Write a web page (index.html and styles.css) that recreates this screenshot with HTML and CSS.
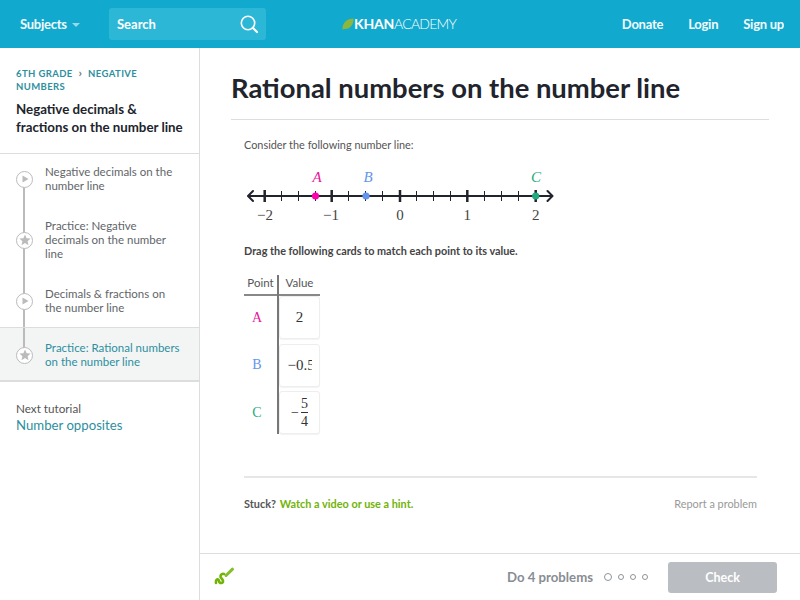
FILE: index.html
```html
<!DOCTYPE html>
<html lang="en">
<head>
    <meta charset="UTF-8">
    <title>Rational numbers on the number line</title>
    <link rel="stylesheet" href="styles.css">
</head>
<body>
    <header class="topbar">
        <div class="topbar-left">
            <a class="nav-link subjects">Subjects <span class="caret"></span></a>
            <div class="search">
                <span>Search</span>
                <svg width="20" height="20" viewBox="0 0 20 20" fill="none" stroke="#fff">
                    <circle cx="9" cy="9" r="6.7" stroke-width="1.6"/>
                    <path d="M13.8 13.8 L18 18" stroke-width="2.2" stroke-linecap="round"/>
                </svg>
            </div>
        </div>
        <div class="logo">
            <svg width="12" height="12" viewBox="0 0 12 12"><path d="M0.5 11.5 C0 5 5 0.5 11.5 0.5 C12 6 8 11.5 2.5 11 Z" fill="#8cb63c"/></svg>
            <span class="logo-bold">KHAN</span><span class="logo-light">ACADEMY</span>
        </div>
        <nav class="topbar-right">
            <a class="nav-link">Donate</a>
            <a class="nav-link">Login</a>
            <a class="nav-link">Sign up</a>
        </nav>
    </header>

    <div class="page">
        <aside class="sidebar">
            <div class="side-head">
                <div class="crumbs">
                    <div>6TH GRADE <span class="crumb-sep">&#8250;</span> NEGATIVE</div>
                    <div>NUMBERS</div>
                </div>
                <h2>Negative decimals &amp;<br>fractions on the number line</h2>
            </div>
            <ul class="lessons">
                <li class="lesson lesson-first">
                    <span class="node"><svg width="10" height="10" viewBox="0 0 10 10"><path d="M2.500 1.500 L8.500 5 L2.500 8.500 Z" fill="#bbb"/></svg></span>
                    <span>Negative decimals on the<br>number line</span>
                </li>
                <li class="lesson">
                    <span class="node"><svg width="12" height="12" viewBox="0 0 12 12"><path d="M6 0.5 L7.6 4.2 L11.6 4.6 L8.6 7.2 L9.5 11.2 L6 9.1 L2.5 11.2 L3.4 7.2 L0.4 4.6 L4.4 4.2 Z" fill="#bbb"/></svg></span>
                    <span>Practice: Negative<br>decimals on the number<br>line</span>
                </li>
                <li class="lesson lesson-third">
                    <span class="node"><svg width="10" height="10" viewBox="0 0 10 10"><path d="M2.500 1.500 L8.500 5 L2.500 8.500 Z" fill="#bbb"/></svg></span>
                    <span>Decimals &amp; fractions on<br>the number line</span>
                </li>
                <li class="lesson lesson-last active">
                    <span class="node"><svg width="12" height="12" viewBox="0 0 12 12"><path d="M6 0.5 L7.6 4.2 L11.6 4.6 L8.6 7.2 L9.5 11.2 L6 9.1 L2.5 11.2 L3.4 7.2 L0.4 4.6 L4.4 4.2 Z" fill="#bbb"/></svg></span>
                    <span>Practice: Rational numbers<br>on the number line</span>
                </li>
            </ul>
            <div class="next">
                <div class="next-label">Next tutorial</div>
                <a class="next-link">Number opposites</a>
            </div>
        </aside>

        <main class="main">
            <div class="content">
                <h1>Rational numbers on the number line</h1>
                <div class="problem">
                    <p class="intro">Consider the following number line:</p>
                    <svg class="numline" width="320" height="70" viewBox="0 0 320 70">
                        <g stroke="#21242c" stroke-width="1">
                            <path d="M37.500 31v10M54.500 31v10M71.500 31v10M104.500 31v10M121.500 31v10M138.500 31v10M172.500 31v10M189.500 31v10M206.500 31v10M240.500 31v10M257.500 31v10M274.500 31v10"/>
                        </g>
                        <g stroke="#21242c" stroke-width="2" fill="none">
                            <path d="M4 36H308.500"/>
                            <path stroke-width="2.500" d="M20.700 30v12M87.700 30v12M156 30v12M223.300 30v12M291.700 30v12"/>
                            <path d="M9 31L4 36L9 41M303.500 31L308.500 36L303.500 41" stroke-linecap="round" stroke-linejoin="round"/>
                        </g>
                        <circle cx="71.500" cy="36" r="3.600" fill="#ff00af"/>
                        <circle cx="122" cy="36" r="3.600" fill="#6495ed"/>
                        <circle cx="291.700" cy="36" r="3.600" fill="#1fab7d"/>
                        <text class="pt" x="73" y="22" text-anchor="middle" fill="#e6149b">A</text>
                        <text class="pt" x="124" y="22" text-anchor="middle" fill="#6495ed">B</text>
                        <text class="pt" x="292" y="22" text-anchor="middle" fill="#1fab7d">C</text>
                        <text class="tick" x="21" y="60" text-anchor="middle">&#8722;2</text>
                        <text class="tick" x="87" y="60" text-anchor="middle">&#8722;1</text>
                        <text class="tick" x="156" y="60" text-anchor="middle">0</text>
                        <text class="tick" x="223.300" y="60" text-anchor="middle">1</text>
                        <text class="tick" x="291.700" y="60" text-anchor="middle">2</text>
                    </svg>
                    <p class="drag">Drag the following cards to match each point to its value.</p>
                    <div class="match">
                        <div class="col-points">
                            <div class="col-head">Point</div>
                            <div class="point pink">A</div>
                            <div class="point blue">B</div>
                            <div class="point green">C</div>
                        </div>
                        <div class="col-values">
                            <div class="col-head">Value</div>
                            <div class="card">2</div>
                            <div class="card"><span class="clip">&#8722;0.5</span></div>
                            <div class="card card-frac">
                                <span class="minus">&#8722;</span>
                                <span class="frac"><span class="num">5</span><span class="den">4</span></span>
                            </div>
                        </div>
                    </div>
                </div>
                <div class="stuck-row">
                    <div><strong class="stuck">Stuck?</strong> <a class="hint">Watch a video or use a hint.</a></div>
                    <a class="report">Report a problem</a>
                </div>
            </div>
            <footer class="footer">
                <svg width="22" height="22" viewBox="0 0 22 22" fill="none" stroke="#71b307">
                    <path d="M3 17 C2.500 13 5.500 12 6 15 C6.500 18 10.500 17.500 10 15 C9.500 12.500 7 12 7.500 10 C8 8 9.500 7.500 11 8" stroke-width="2.600" stroke-linecap="round"/>
                    <path d="M13 9.500 L19.500 3.200" stroke="#85bd2c" stroke-width="3" stroke-linecap="round"/>
                </svg>
                <div class="footer-right">
                    <span class="do-text">Do 4 problems</span>
                    <span class="dots"><i class="dot dot-first"></i><i class="dot"></i><i class="dot"></i><i class="dot"></i></span>
                    <button class="check">Check</button>
                </div>
            </footer>
        </main>
    </div>
</body>
</html>
```

FILE: styles.css
```css
* {
    margin: 0;
    padding: 0;
    box-sizing: border-box;
}

html, body {
    height: 100%;
    overflow: hidden;
}

body {
    font-family: 'Lato', 'Liberation Sans', sans-serif;
    color: #21242c;
    background: #fff;
    display: flex;
    flex-direction: column;
}

.topbar {
    height: 48px;
    background: #12a9ce;
    display: flex;
    align-items: center;
    justify-content: space-between;
    padding: 0 16px 0 20px;
    position: relative;
    flex-shrink: 0;
}

.topbar-left, .topbar-right {
    display: flex;
    align-items: center;
}

.nav-link {
    color: #fff;
    font-size: 13px;
    font-weight: 700;
    letter-spacing: -0.25px;
    opacity: 0.95;
}

.topbar-right {
    gap: 25px;
}

.subjects {
    width: 89px;
}

.caret {
    display: inline-block;
    width: 0;
    height: 0;
    margin-left: 2px;
    vertical-align: 2px;
    border-left: 4px solid transparent;
    border-right: 4px solid transparent;
    border-top: 4px solid rgba(255, 255, 255, 0.6);
}

.search {
    width: 157px;
    height: 32px;
    background: #2db7d6;
    border-radius: 3px;
    display: flex;
    align-items: center;
    justify-content: space-between;
    padding: 0 7px 0 8px;
    color: #fff;
    font-size: 13px;
    font-weight: 700;
}

.logo {
    position: absolute;
    left: 342px;
    top: 16px;
    display: flex;
    align-items: center;
    color: #fff;
    font-size: 14px;
    line-height: 16px;
}

.logo-bold {
    font-weight: 700;
    letter-spacing: -0.2px;
}

.logo-light {
    font-weight: 300;
    letter-spacing: -0.8px;
}

.page {
    flex: 1;
    display: flex;
    min-height: 0;
}

.sidebar {
    width: 200px;
    border-right: 1px solid #ddd;
    flex-shrink: 0;
}

.side-head {
    padding: 19px 16px 0;
    height: 105px;
}

.crumbs {
    font-size: 9.500px;
    line-height: 13px;
    font-weight: 700;
    letter-spacing: 0.4px;
    color: #2e8f9e;
}

.crumb-sep {
    font-size: 12px;
    line-height: 12px;
    color: #777;
    margin: 0 3px;
}

.side-head h2 {
    font-size: 13.300px;
    line-height: 18px;
    font-weight: 700;
    margin-top: 7px;
    white-space: nowrap;
    color: #21242c;
}

.lessons {
    list-style: none;
    border-top: 1px solid #ddd;
}

.lesson {
    display: flex;
    align-items: center;
    gap: 12px;
    padding: 13px 12px 13px 16px;
    font-size: 11.500px;
    line-height: 14px;
    color: #626569;
    position: relative;
}

.lesson::before {
    content: "";
    position: absolute;
    left: 23px;
    top: 0;
    bottom: 0;
    width: 2px;
    background: #bbb;
}

.lesson-first {
    padding-top: 11px;
}

.lesson-first::before {
    top: 50%;
}

.lesson-third {
    padding-bottom: 12px;
}

.lesson-last::before {
    bottom: 50%;
}

.lesson.active {
    background: #f3f5f5;
    color: #2e8f9e;
    padding: 13px 12px 11px 16px;
    border-top: 1px solid #ddd;
    border-bottom: 2px solid #ddd;
}

.node {
    width: 17px;
    height: 17px;
    border: 1.500px solid #bbb;
    border-radius: 50%;
    background: #fff;
    display: flex;
    align-items: center;
    justify-content: center;
    flex-shrink: 0;
    position: relative;
}

.next {
    padding: 19px 16px;
}

.next-label {
    font-size: 11.700px;
    line-height: 15px;
    color: #555;
}

.next-link {
    display: block;
    font-size: 13.200px;
    line-height: 18px;
    color: #2e8f9e;
}

.main {
    flex: 1;
    display: flex;
    flex-direction: column;
    min-width: 0;
}

.content {
    flex: 1;
    padding: 0 31px;
}

h1 {
    font-size: 27.400px;
    line-height: 34px;
    font-weight: 700;
    padding: 23px 0 13px;
    border-bottom: 1px solid #ddd;
    height: 72px;
}

.problem {
    padding: 18px 12px 0 13px;
    height: 356px;
}

.intro {
    font-size: 10.900px;
    line-height: 14px;
    color: #555;
}

.numline {
    display: block;
    margin-top: 8px;
}

.pt {
    font-family: 'Liberation Serif', serif;
    font-style: italic;
    font-size: 15px;
}

.tick {
    font-family: 'Liberation Serif', serif;
    font-size: 15px;
    fill: #444;
}

.drag {
    font-size: 10.850px;
    line-height: 14px;
    font-weight: 700;
    color: #444;
    margin-top: 14px;
}

.match {
    display: flex;
    height: 159px;
    margin-top: 17px;
    font-family: 'Liberation Serif', serif;
}

.col-head {
    font-family: 'Lato', sans-serif;
    font-size: 11.500px;
    line-height: 16px;
    height: 21px;
    color: #555;
    border-bottom: 2px solid #888;
    text-align: center;
}

.col-points {
    width: 35px;
    border-right: 2px solid #777;
}

.col-points .col-head {
    margin-bottom: -2px;
}

.col-values {
    width: 41px;
}

.point {
    height: 47.500px;
    display: flex;
    align-items: center;
    justify-content: center;
    padding-right: 7px;
    font-size: 14px;
}

.pink { color: #e6149b; }
.blue { color: #6495ed; }
.green { color: #1fab7d; }

.card {
    height: 43px;
    width: 41px;
    margin-bottom: 4.500px;
    border: 1px solid #eee;
    border-radius: 3px;
    box-shadow: 0 1px 1px rgba(0, 0, 0, 0.05);
    display: flex;
    align-items: center;
    justify-content: center;
    font-size: 15px;
    color: #333;
    background: #fff;
}

.card:last-child {
    margin-bottom: 0;
}

.card-frac {
    font-size: 14px;
}

.clip {
    display: block;
    width: 24px;
    overflow: hidden;
    white-space: nowrap;
}

.minus {
    margin-right: 2px;
}

.frac {
    display: inline-flex;
    flex-direction: column;
    align-items: center;
    line-height: 17px;
}

.num {
    border-bottom: 1px solid #333;
}

.stuck-row {
    display: flex;
    justify-content: space-between;
    align-items: center;
    border-top: 2px solid #e6e6e6;
    margin: 0 12px 0 13px;
    padding-top: 19px;
    font-size: 10.900px;
    line-height: 14px;
}

.stuck {
    color: #555;
    margin-right: 1px;
}

.hint {
    color: #71b307;
    font-weight: 700;
}

.report {
    color: #999;
}

.footer {
    height: 47px;
    border-top: 1px solid #ddd;
    display: flex;
    align-items: center;
    justify-content: space-between;
    padding: 0 23px 0 13px;
    flex-shrink: 0;
}

.footer-right {
    display: flex;
    align-items: center;
}

.do-text {
    font-size: 13.200px;
    font-weight: 700;
    color: #888d93;
}

.dots {
    display: flex;
    align-items: center;
    gap: 6px;
    margin: 0 20px 0 11px;
}

.dot {
    width: 6px;
    height: 6px;
    border: 1px solid #8f9499;
    border-radius: 50%;
}

.dot-first {
    width: 8px;
    height: 8px;
}

.check {
    width: 109px;
    height: 31px;
    border: none;
    border-radius: 3px;
    background: #babec2;
    color: #fff;
    font-family: inherit;
    font-size: 12.500px;
    font-weight: 700;
}
```
